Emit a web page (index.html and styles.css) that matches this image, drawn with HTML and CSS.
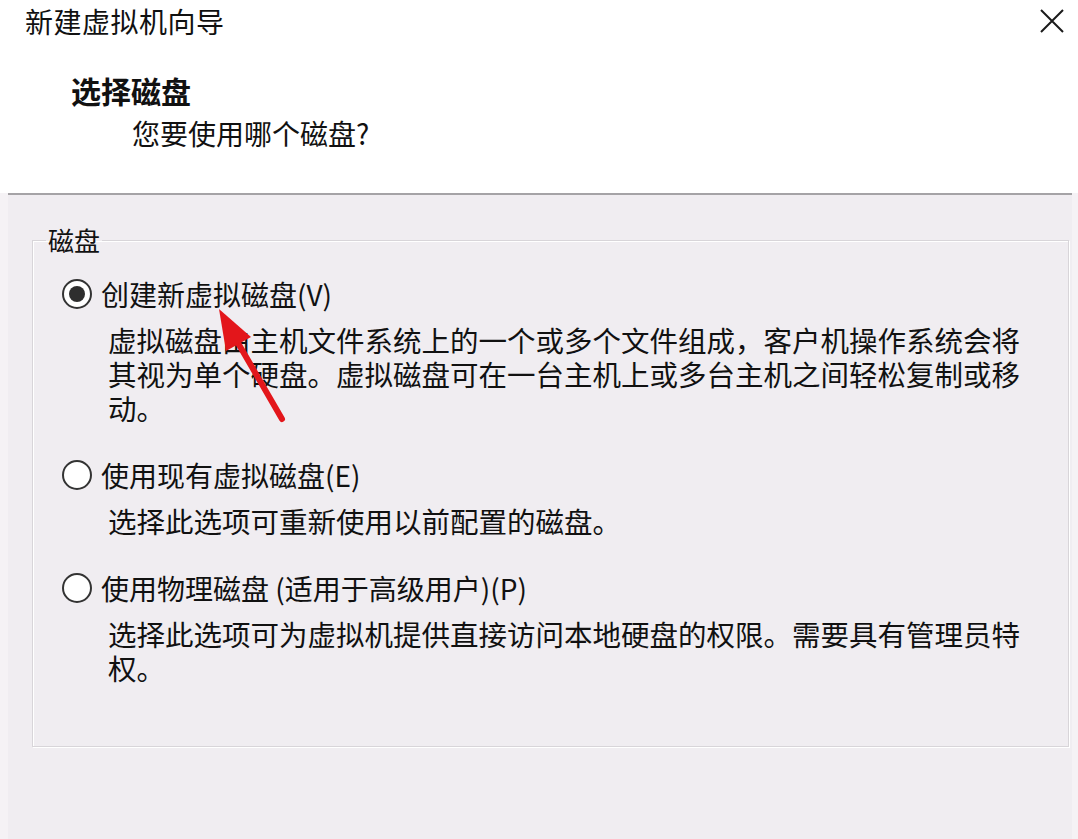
FILE: index.html
```html
<!DOCTYPE html>
<html lang="zh-CN">
<head>
<meta charset="utf-8">
<title>新建虚拟机向导</title>
<link rel="stylesheet" href="styles.css">
</head>
<body>
<div class="window">
  <div class="titlebar">
    <span class="title">新建虚拟机向导</span>
    <svg class="close" width="26" height="26" viewBox="0 0 26 26"><path d="M2 2 L24 24 M24 2 L2 24" stroke="#1a1a1a" stroke-width="2" fill="none"/></svg>
  </div>
  <div class="header">
    <div class="heading">选择磁盘</div>
    <div class="subheading">您要使用哪个磁盘?</div>
  </div>
  <div class="divider"></div>
  <div class="body">
    <fieldset class="group">
      <legend class="legend">磁盘</legend>
      <div class="option">
        <div class="radio-row"><span class="radio checked"></span><span class="radio-label">创建新虚拟磁盘(V)</span></div>
        <div class="desc">虚拟磁盘由主机文件系统上的一个或多个文件组成，客户机操作系统会将<br>其视为单个硬盘。虚拟磁盘可在一台主机上或多台主机之间轻松复制或移<br>动。</div>
      </div>
      <div class="option">
        <div class="radio-row"><span class="radio"></span><span class="radio-label">使用现有虚拟磁盘(E)</span></div>
        <div class="desc">选择此选项可重新使用以前配置的磁盘。</div>
      </div>
      <div class="option">
        <div class="radio-row"><span class="radio"></span><span class="radio-label">使用物理磁盘 (适用于高级用户)(P)</span></div>
        <div class="desc">选择此选项可为虚拟机提供直接访问本地硬盘的权限。需要具有管理员特<br>权。</div>
      </div>
    </fieldset>
  </div>
  <svg class="arrow" width="1078" height="839" viewBox="0 0 1078 839">
    <line x1="238" y1="343" x2="282" y2="419" stroke="#e3161b" stroke-width="6" stroke-linecap="round"/>
    <polygon points="219,309 251,337 226,351" fill="#e3161b"/>
  </svg>
</div>
</body>
</html>
```
FILE: styles.css
```css
html, body {
  margin: 0;
  padding: 0;
}
body {
  font-family: "Noto Sans CJK SC", "Noto Sans", sans-serif;
  color: #111;
  background: #ffffff;
}
.window {
  position: relative;
  width: 1078px;
  height: 839px;
  background: #f5f2f5;
  overflow: hidden;
  display: flex;
  flex-direction: column;
}
.titlebar {
  background: #ffffff;
  height: 58px;
  display: flex;
  justify-content: space-between;
  align-items: flex-start;
  padding: 0 13px 0 25px;
}
.title {
  font-size: 28px;
  line-height: 42px;
  letter-spacing: 0.5px;
}
.close {
  margin-top: 8px;
}
.header {
  background: #ffffff;
  height: 135px;
  box-sizing: border-box;
  padding: 15px 0 0 71px;
}
.heading {
  font-size: 30px;
  font-weight: bold;
  line-height: 34px;
}
.subheading {
  font-size: 28px;
  line-height: 40px;
  margin-left: 61px;
  margin-top: 6px;
}
.divider {
  height: 2px;
  background: #a5a3a6;
  margin: 0 6px 0 8px;
}
.body {
  flex: 1;
  background: #f0edf1;
  margin: 0 6px 0 8px;
  padding: 32px 3px 0 24px;
}
.group {
  margin: 0;
  padding: 24px 0 60px 29px;
  border: 1px solid #d8d5d9;
  box-shadow: inset 1px 1px 0 #ffffff, 1px 1px 0 #ffffff;
  min-width: 0;
  height: 520px;
  box-sizing: border-box;
}
.legend {
  font-size: 26px;
  line-height: 26px;
  padding: 0 2px;
  margin-left: -16px;
}
.option {
  margin-bottom: 33px;
}
.radio-row {
  display: flex;
  align-items: center;
  height: 34px;
}
.radio {
  width: 26px;
  height: 26px;
  border: 2px solid #333333;
  border-radius: 50%;
  background: #ffffff;
  box-sizing: content-box;
  display: flex;
  align-items: center;
  justify-content: center;
  flex: none;
}
.radio.checked::after {
  content: "";
  width: 16px;
  height: 16px;
  border-radius: 50%;
  background: #2e2e2e;
}
.radio-label {
  font-size: 28px;
  line-height: 34px;
  margin-left: 9px;
}
.desc {
  font-size: 28.5px;
  line-height: 34px;
  margin-top: 12px;
  margin-left: 46px;
}
.arrow {
  position: absolute;
  left: 0;
  top: 0;
  pointer-events: none;
}
```
